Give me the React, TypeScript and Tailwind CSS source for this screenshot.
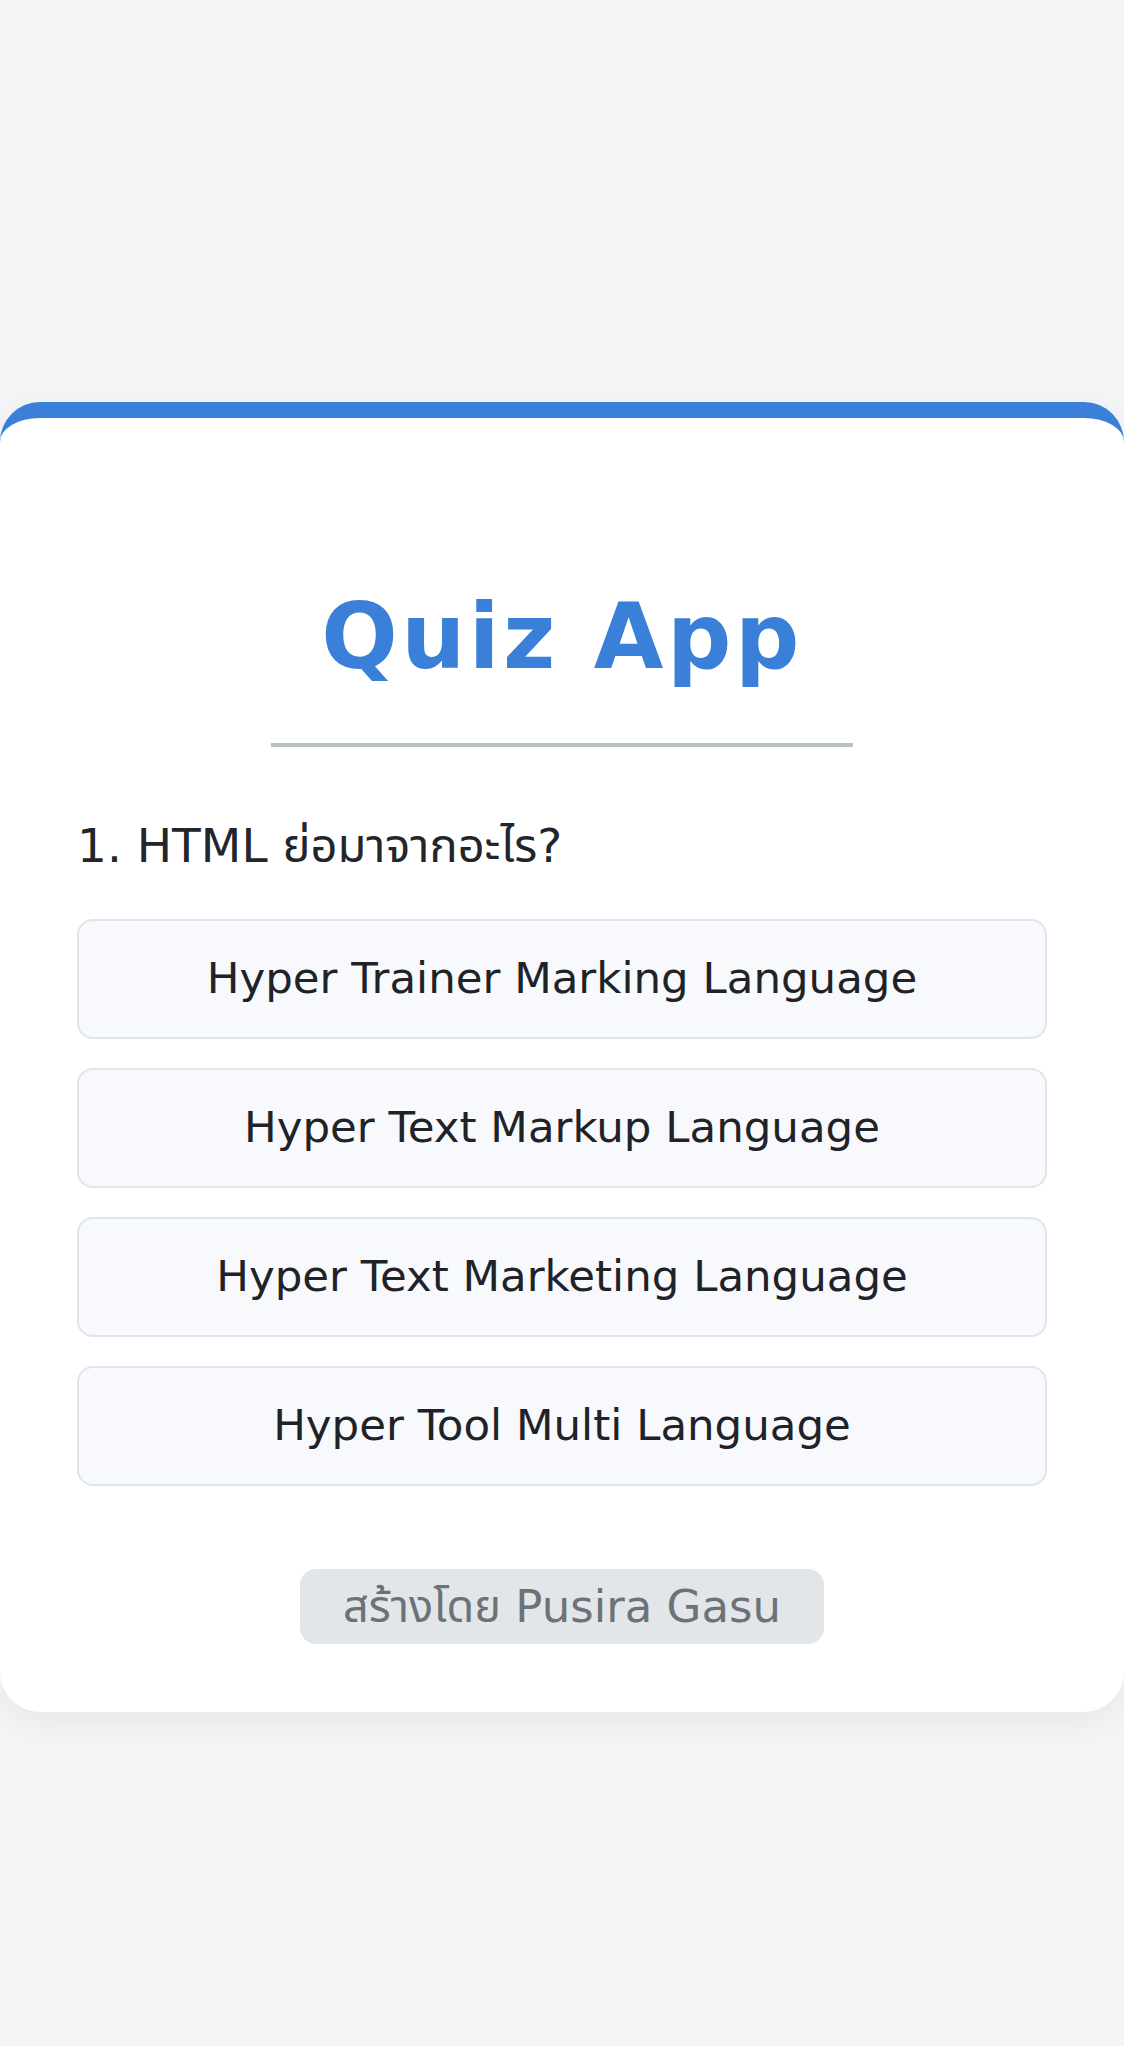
const options = [
  "Hyper Trainer Marking Language",
  "Hyper Text Markup Language",
  "Hyper Text Marketing Language",
  "Hyper Tool Multi Language",
];

export default function App() {
  return (
    <div
      className="min-h-[2046px] bg-[#f3f4f6] pt-[402px]"
      style={{ fontFamily: '"DejaVu Sans", "Noto Sans Thai", "Noto Sans", sans-serif' }}
    >
      {/* Card */}
      <div className="bg-white border-t-[16px] border-[#3a7fd8] rounded-[40px] shadow-[0_10px_30px_rgba(0,0,0,0.05)] px-[77px] pt-[174px] pb-[68px]">
        <h1 className="text-center text-[90px] leading-none font-bold text-[#3a7fd8] tracking-[3.5px]">
          Quiz App
        </h1>

        <div className="mx-auto mt-[61px] h-[4px] w-[582px] bg-[#b7c2c0]" />

        <p className="mt-[75px] text-[47px] leading-none text-[#222529]">
          1. HTML ย่อมาจากอะไร?
        </p>

        <div className="mt-[50px] flex flex-col gap-[29px]">
          {options.map((option) => (
            <button
              key={option}
              className="h-[120px] w-full rounded-[16px] border-2 border-[#dfe5ec] bg-[#f7f9fc] text-[43.5px] text-[#1f2328] flex items-center justify-center"
            >
              {option}
            </button>
          ))}
        </div>

        {/* Footer */}
        <div className="mt-[83px] flex justify-center">
          <div className="h-[75px] px-[43px] rounded-[16px] bg-[#e2e6e9] text-[45px] text-[#6c7278] flex items-center">
            สร้างโดย Pusira Gasu
          </div>
        </div>
      </div>
    </div>
  );
}
